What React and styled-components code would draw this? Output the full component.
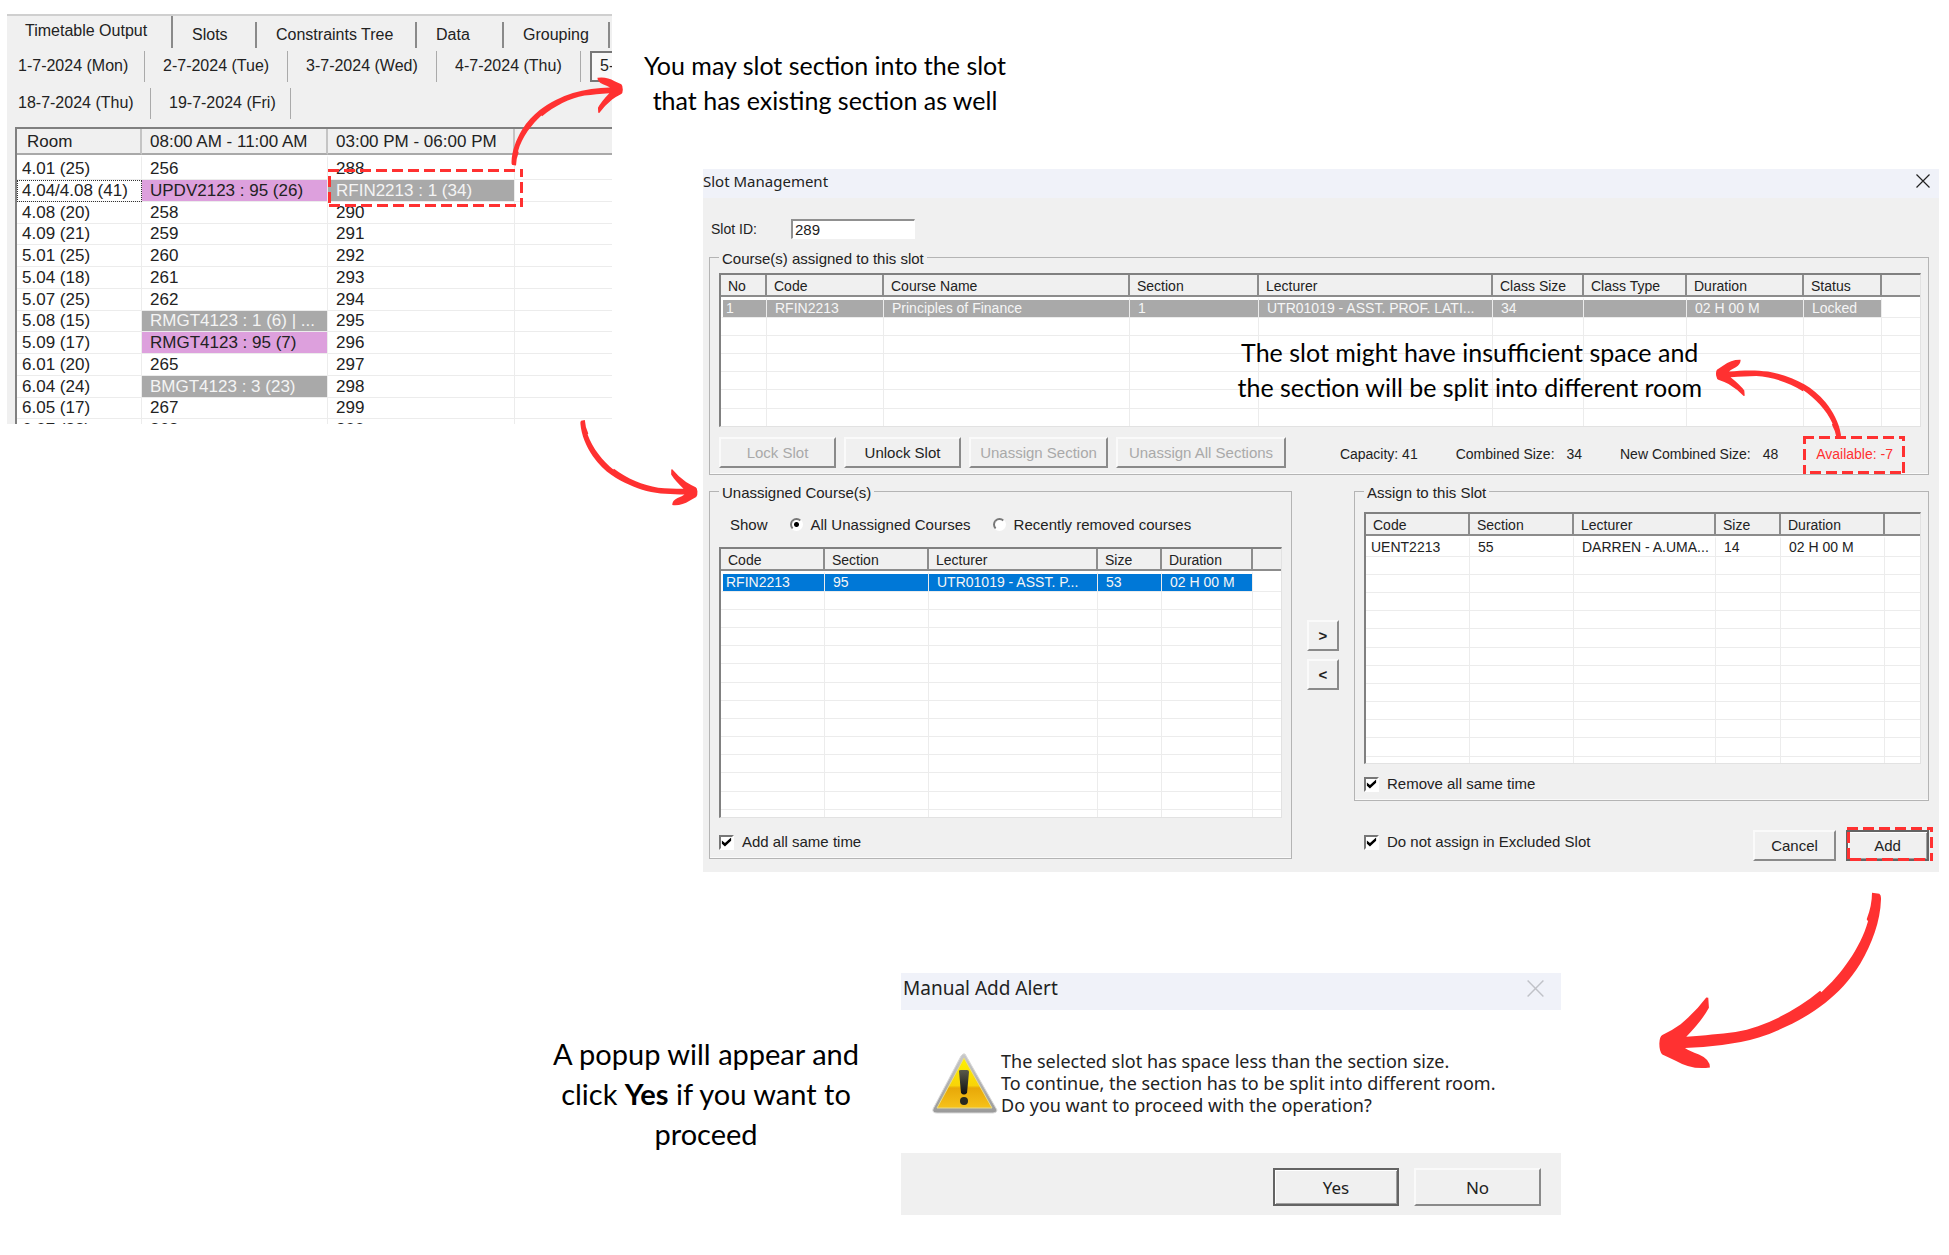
import styled, { createGlobalStyle, css } from 'styled-components'

const RED = '#ff3131'

const GlobalStyle = createGlobalStyle`
  * { box-sizing: border-box; }
  body {
    margin: 0;
    background: #fff;
    color: #222;
    font-family: "Liberation Sans", Arial, sans-serif;
    font-size: 14px;
  }
  button, input { font-family: inherit; color: inherit; }
`

const ROOMS = [
  ['4.01 (25)', '256', '288'],
  ['4.04/4.08 (41)', 'UPDV2123 : 95 (26)', 'RFIN2213 : 1 (34)'],
  ['4.08 (20)', '258', '290'],
  ['4.09 (21)', '259', '291'],
  ['5.01 (25)', '260', '292'],
  ['5.04 (18)', '261', '293'],
  ['5.07 (25)', '262', '294'],
  ['5.08 (15)', 'RMGT4123 : 1 (6) | ...', '295'],
  ['5.09 (17)', 'RMGT4123 : 95 (7)', '296'],
  ['6.01 (20)', '265', '297'],
  ['6.04 (24)', 'BMGT4123 : 3 (23)', '298'],
  ['6.05 (17)', '267', '299'],
  ['6.07 (22)', '268', '300'],
]

const PINK = ['UPDV2123 : 95 (26)', 'RMGT4123 : 95 (7)']
const GREY = ['RFIN2213 : 1 (34)', 'RMGT4123 : 1 (6) | ...', 'BMGT4123 : 3 (23)']

const tone = (text) => {
  if (PINK.includes(text)) return 'pink'
  if (GREY.includes(text)) return 'grey'
  return undefined
}

const ASSIGNED = {
  cols: [['No', 46], ['Code', 117], ['Course Name', 246], ['Section', 129], ['Lecturer', 234], ['Class Size', 91], ['Class Type', 103], ['Duration', 117], ['Status', 78]],
  row: ['1', 'RFIN2213', 'Principles of Finance', '1', 'UTR01019 - ASST. PROF. LATI...', '34', '', '02 H 00 M', 'Locked'],
}

const UNASSIGNED = {
  cols: [['Code', 104], ['Section', 104], ['Lecturer', 169], ['Size', 64], ['Duration', 91]],
  row: ['RFIN2213', '95', 'UTR01019 - ASST. P...', '53', '02 H 00 M'],
}

const ASSIGN = {
  cols: [['Code', 104], ['Section', 104], ['Lecturer', 142], ['Size', 65], ['Duration', 104]],
  row: ['UENT2213', '55', 'DARREN - A.UMA...', '14', '02 H 00 M'],
}

const Arrow = (props) => (
  <ArrowSvg viewBox='180 90 670 532' aria-hidden='true' {...props}>
    <path
      fill={RED}
      d='M820 92 L842 95 Q848 100 847 112 C845 180 820 245 785 305 C755 355 715 395 680 423 C620 470 545 506 480 527 C410 548 330 555 258 559
      Q270 568 300 578 Q333 592 333 617 Q280 626 230 597 L190 578 Q181 570 181 545 Q182 524 190 520 Q220 505 245 487 Q290 450 322 407 L328 408 L330 438
      Q310 475 262 525 C320 521 360 517 410 511 C500 494 590 448 664 387 L668 391 C725 340 785 260 808 178 L804 172 Q820 130 820 92 Z'
    />
  </ArrowSvg>
)

const DashedBox = (props) => (
  <DashedSvg aria-hidden='true' {...props}>
    <rect width='100%' height='100%' fill='none' stroke={RED} strokeWidth='6' strokeDasharray='11 5' />
  </DashedSvg>
)

const CloseIcon = ({ size }) => (
  <svg width={size} height={size} viewBox='0 0 14 14' fill='none' stroke='currentColor' strokeWidth='1.2'>
    <path d='M0.5 0.5 L13.5 13.5 M13.5 0.5 L0.5 13.5' />
  </svg>
)

const WarningIcon = () => (
  <svg width='68' height='62' viewBox='0 0 68 62' aria-hidden='true'>
    <defs>
      <linearGradient id='warnFill' x1='0' y1='0' x2='0' y2='1'>
        <stop offset='0' stopColor='#fff200' />
        <stop offset='0.55' stopColor='#f8d408' />
        <stop offset='0.6' stopColor='#e8a808' />
        <stop offset='1' stopColor='#f6c21a' />
      </linearGradient>
      <linearGradient id='warnRim' x1='0' y1='0' x2='0' y2='1'>
        <stop offset='0' stopColor='#c9c9c9' />
        <stop offset='1' stopColor='#9a9a9a' />
      </linearGradient>
      <linearGradient id='warnMark' x1='0' y1='0' x2='0' y2='1'>
        <stop offset='0' stopColor='#5a5a4a' />
        <stop offset='1' stopColor='#101010' />
      </linearGradient>
    </defs>
    <path d='M34 2 L66 58 Q66 61 62 61 H6 Q1 61 2 57 L30 4 Q32 1 34 2 Z' fill='url(#warnRim)' stroke='#d9d9d9' />
    <path d='M33 6 L61 56 H6 Z' fill='url(#warnFill)' stroke='#e9dc8a' />
    <path d='M28 19 Q28 18 30 18 H36 Q38 18 38 20 L36 41 Q33 44 30 41 Z' fill='url(#warnMark)' />
    <circle cx='33' cy='49' r='4' fill='#2a2a20' />
  </svg>
)

const ListView = ({ data, rows, height, selected }) => (
  <ListFrame $height={height}>
    <ListTable $selected={selected}>
      <colgroup>
        {data.cols.map(([name, width]) => <Col key={name} $width={width} />)}
        <col />
      </colgroup>
      <thead>
        <tr>
          {data.cols.map(([name]) => <th key={name}>{name}</th>)}
          <td />
        </tr>
      </thead>
      <tbody>
        <tr>
          {data.row.map((cell, i) => <td key={i}>{cell}</td>)}
          <td />
        </tr>
        {Array.from({ length: rows }, (_, r) => (
          <tr key={r}>
            {data.cols.map(([name]) => <td key={name} />)}
            <td />
          </tr>
        ))}
      </tbody>
    </ListTable>
  </ListFrame>
)

const Timetable = () => (
  <TimetablePanel>
    <TabRow>
      <Tab $width={166} $active>Timetable Output</Tab>
      <Tab $width={84}>Slots</Tab>
      <Tab $width={160}>Constraints Tree</Tab>
      <Tab $width={87}>Data</Tab>
      <Tab $width={106}>Grouping</Tab>
    </TabRow>
    <DateRow>
      <DateTab $width={138}>1-7-2024 (Mon)</DateTab>
      <DateTab $width={143}>2-7-2024 (Tue)</DateTab>
      <DateTab $width={149}>3-7-2024 (Wed)</DateTab>
      <DateTab $width={144}>4-7-2024 (Thu)</DateTab>
      <OpenDate>5-</OpenDate>
    </DateRow>
    <DateRow>
      <DateTab $width={144}>18-7-2024 (Thu)</DateTab>
      <DateTab $width={140}>19-7-2024 (Fri)</DateTab>
    </DateRow>
    <RoomFrame>
      <RoomTable>
        <colgroup>
          <Col $width={125} />
          <Col $width={186} />
          <Col $width={187} />
          <col />
        </colgroup>
        <thead>
          <tr>
            <th>Room</th>
            <th>08:00 AM - 11:00 AM</th>
            <th>03:00 PM - 06:00 PM</th>
            <td />
          </tr>
        </thead>
        <tbody>
          {ROOMS.map(([room, morning, noon]) => (
            <tr key={room}>
              <RoomCell $focus={room === '4.04/4.08 (41)'}>{room}</RoomCell>
              <RoomCell $tone={tone(morning)}>{morning}</RoomCell>
              <RoomCell $tone={tone(noon)}>
                {noon}
                {tone(noon) && <CellMark />}
              </RoomCell>
              <td />
            </tr>
          ))}
        </tbody>
      </RoomTable>
    </RoomFrame>
  </TimetablePanel>
)

const SlotManagement = () => (
  <Dialog>
    <DialogTitle>
      <h2>Slot Management</h2>
      <CloseButton aria-label='Close'><CloseIcon size={14} /></CloseButton>
    </DialogTitle>
    <DialogBody>
      <SlotRow>
        <label htmlFor='slot-id'>Slot ID:</label>
        <SlotInput id='slot-id' type='text' defaultValue='289' />
      </SlotRow>

      <Group $top={5} $right={7} $bottom={6}>
        <legend>Course(s) assigned to this slot</legend>
        <ListWrap>
          <ListView data={ASSIGNED} rows={7} height={154} selected='#a9a9a9' />
          <SpaceNote>
            The slot might have insufficient space and<br />
            the section will be split into different room
          </SpaceNote>
        </ListWrap>
        <ActionRow>
          <Button $width={117} disabled>Lock Slot</Button>
          <Button $width={117}>Unlock Slot</Button>
          <Button $width={139} disabled>Unassign Section</Button>
          <Button $width={170} disabled>Unassign All Sections</Button>
          <Stats>
            <Stat>Capacity: 41</Stat>
            <Stat>Combined Size: <span>34</span></Stat>
            <Stat>New Combined Size: <span>48</span></Stat>
            <Available>
              Available: -7
              <AvailableMark />
              <AvailableArrow />
            </Available>
          </Stats>
        </ActionRow>
      </Group>

      <Columns>
        <Group $top={0} $right={9} $bottom={7}>
          <legend>Unassigned Course(s)</legend>
          <ShowRow>
            <span>Show</span>
            <Choice><Radio name='show' defaultChecked />All Unassigned Courses</Choice>
            <Choice><Radio name='show' />Recently removed courses</Choice>
          </ShowRow>
          <ListView data={UNASSIGNED} rows={13} height={271} selected='#0078d7' />
          <CheckLabel $top={15}><CheckBox defaultChecked />Add all same time</CheckLabel>
        </Group>

        <MoveButtons>
          <Button $width={32}>&gt;</Button>
          <Button $width={32}>&lt;</Button>
        </MoveButtons>

        <div>
          <Group $top={10} $right={7} $bottom={7}>
            <legend>Assign to this Slot</legend>
            <ListView data={ASSIGN} rows={12} height={252} />
            <CheckLabel $top={11}><CheckBox defaultChecked />Remove all same time</CheckLabel>
          </Group>
          <FooterRow>
            <CheckLabel $top={3}><CheckBox defaultChecked />Do not assign in Excluded Slot</CheckLabel>
            <FooterButtons>
              <Button $width={83}>Cancel</Button>
              <Marked>
                <Button $width={83} $main>Add</Button>
                <AddMark />
              </Marked>
            </FooterButtons>
          </FooterRow>
        </div>
      </Columns>
    </DialogBody>
  </Dialog>
)

const ManualAddAlert = () => (
  <Alert>
    <AlertTitle>
      <h2>Manual Add Alert</h2>
      <CloseButton aria-label='Close' $faded><CloseIcon size={17} /></CloseButton>
    </AlertTitle>
    <AlertBody>
      <WarningIcon />
      <p>
        The selected slot has space less than the section size.<br />
        To continue, the section has to be split into different room.<br />
        Do you want to proceed with the operation?
      </p>
    </AlertBody>
    <AlertFooter>
      <AlertButton $width={126} $main>Yes</AlertButton>
      <AlertButton $width={127}>No</AlertButton>
    </AlertFooter>
  </Alert>
)

const App = () => {
  return (
    <Page>
      <GlobalStyle />
      <TopRow>
        <Timetable />
        <Right>
          <TopNote>
            You may slot section into the slot<br />
            that has existing section as well
          </TopNote>
          <SlotManagement />
        </Right>
        <UpArrow />
        <DownArrow />
      </TopRow>
      <BottomRow>
        <PopupNote>
          A popup will appear and<br />
          click <strong>Yes</strong> if you want to<br />
          proceed
        </PopupNote>
        <ManualAddAlert />
        <BigArrow />
      </BottomRow>
    </Page>
  )
}

export default App


const ArrowSvg = styled.svg`
  display: block;
  overflow: visible;
`

const DashedSvg = styled.svg`
  position: absolute;
  overflow: hidden;
  pointer-events: none;
`

const Page = styled.main`
  min-height: 100vh;
  overflow: hidden;
`

const TopRow = styled.section`
  position: relative;
  display: flex;
  align-items: flex-start;
  gap: 31px;
  padding: 14px 10px 0 7px;
`

const Right = styled.div`
  flex: 1;
  min-width: 0;
`

const BottomRow = styled.section`
  display: flex;
  justify-content: flex-end;
  align-items: flex-start;
  padding: 20px 67px 40px 0;
`

/* arrows between the windows */

const UpArrow = styled(Arrow)`
  position: absolute;
  left: 511px;
  top: 77px;
  width: 112px;
  transform: rotate(180deg);
`

const DownArrow = styled(Arrow)`
  position: absolute;
  left: 582px;
  top: 417px;
  width: 114px;
  transform: rotate(-3deg) scaleX(-1);
`

const AvailableArrow = styled(Arrow)`
  position: absolute;
  left: -96px;
  top: -91px;
  width: 116px;
  transform: rotate(-8deg) scaleY(-1);
`

const BigArrow = styled(Arrow)`
  width: 223px;
  margin-left: 98px;
`

/* notes */

const Note = styled.p`
  margin: 0;
  color: #000;
  font-family: Lato, sans-serif;
  font-size: 25px;
  line-height: 35px;
  text-align: center;
`

const TopNote = styled(Note)`
  width: 364px;
  white-space: nowrap;
  padding-top: 34px;
  margin-bottom: 51px;
`

const SpaceNote = styled(Note)`
  position: absolute;
  right: 219px;
  top: 62px;
  white-space: nowrap;
`

const PopupNote = styled(Note)`
  margin: 142px 42px 0 0;
  font-size: 29px;
  line-height: 40px;
  white-space: nowrap;
`

/* timetable window */

const TimetablePanel = styled.div`
  flex: none;
  width: 605px;
  height: 410px;
  overflow: hidden;
  background: #f0f0f0;
  border-top: 2px solid #cfcfcf;
  font-size: 16px;
`

const TabRow = styled.div`
  display: flex;
  align-items: flex-end;
  height: 32px;
`

const Tab = styled.button`
  flex: none;
  width: ${p => p.$width}px;
  height: ${p => p.$active ? 32 : 26}px;
  padding: ${p => p.$active ? '0 0 2px 18px' : '0 0 1px 19px'};
  border: none;
  border-right: 2px solid #8a8a8a;
  background: none;
  font-size: 16px;
  text-align: left;
  white-space: nowrap;
`

const DateRow = styled.div`
  display: flex;
  height: 31px;
  margin: 3px 0 6px;
`

const DateTab = styled.button`
  flex: none;
  width: ${p => p.$width}px;
  padding: 0 0 2px 18px;
  border: none;
  border-right: 1px solid #aaa;
  background: none;
  font-size: 16px;
  text-align: left;
  white-space: nowrap;

  &:first-child { padding-left: 11px; }
`

const OpenDate = styled(DateTab)`
  width: 60px;
  margin-left: 9px;
  padding-left: 8px;
  background: #f8f8f8;
  border: 2px solid #777;
`

const RoomFrame = styled.div`
  margin: 8px 0 0 8px;
  background: #fff;
  border-left: 2px solid #808080;
  border-top: 2px solid #808080;
`

const tableBase = css`
  width: 100%;
  table-layout: fixed;
  border-collapse: separate;
  border-spacing: 0;
  white-space: nowrap;

  th {
    font-weight: normal;
    text-align: left;
  }
  td:last-child { border-right: none; }
`

const Col = styled.col`
  width: ${p => p.$width}px;
`

const RoomTable = styled.table`
  ${tableBase}
  font-size: 17px;

  thead th, thead td {
    height: 26px;
    padding: 2px 0 0 8px;
    background: #f0f0f0;
    border-right: 2px solid #c4c4c4;
    border-bottom: 2px solid #a9a9a9;
    line-height: 20px;
  }
  thead th:first-child { padding-left: 10px; }

  tbody td {
    height: 22px;
    padding: 0 0 0 8px;
    border-right: 1px solid #ececec;
    border-bottom: 1px solid #ececec;
    line-height: 21px;
  }
  tbody tr:nth-child(4n) td {
    height: 21px;
    line-height: 20px;
  }
  tbody tr:first-child td {
    height: 25px;
    border-top: 3px solid #fff;
  }
  tbody td:first-child { padding-left: 5px; }
`

const TONES = {
  pink: css`background: #dda0dd;`,
  grey: css`background: #a9a9a9; color: #f4f4f4;`,
}

const RoomCell = styled.td`
  position: relative;
  ${p => TONES[p.$tone]}
  ${p => p.$focus && css`
    outline: 1px dotted #333;
    outline-offset: -1px;
  `}
`

const CellMark = styled(DashedBox)`
  left: 0;
  top: -11px;
  width: 195px;
  height: 38px;
  z-index: 1;
`

/* slot management window */

const Dialog = styled.section`
  margin-left: 60px;
  background: #f0f0f0;
`

const DialogTitle = styled.header`
  display: flex;
  justify-content: space-between;
  height: 29px;
  padding: 2px 9px 0 0;
  background: #f0f2f9;

  h2 {
    margin: 0;
    font: 15px/20px "Noto Sans", sans-serif;
  }
`

const CloseButton = styled.button`
  display: flex;
  align-items: center;
  height: 20px;
  padding: 0;
  border: none;
  background: none;
  color: ${p => p.$faded ? '#c0c2c8' : '#222'};
`

const DialogBody = styled.div`
  padding: 21px 10px 11px 6px;
  font-size: 15px;
`

const SlotRow = styled.div`
  display: flex;
  align-items: center;
  height: 20px;
  margin-bottom: 7px;
  padding-left: 2px;
  font-size: 14px;

  label { width: 80px; }
`

const SlotInput = styled.input`
  width: 124px;
  height: 20px;
  padding: 0 2px;
  border: 1px solid #fff;
  border-left: 2px solid #909090;
  border-top: 2px solid #909090;
  background: #fff;
  font-size: 15px;
`

const Group = styled.fieldset`
  min-width: 0;
  margin: 0;
  padding: ${p => p.$top}px ${p => p.$right}px ${p => p.$bottom}px 9px;
  border: 1px solid #b4b4b4;
  box-shadow: inset 0 -1px 0 #fafafa;

  legend {
    padding: 4px 3px 0;
    font-size: 15px;
    line-height: 18px;
  }
`

const ListWrap = styled.div`
  position: relative;
`

const ListFrame = styled.div`
  height: ${p => p.$height}px;
  overflow: hidden;
  background: #fff;
  border: 1px solid #e2e2e2;
  border-left: 2px solid #808080;
  border-top: 2px solid #808080;
`

const ListTable = styled.table`
  ${tableBase}
  font-size: 14px;

  thead th, thead td {
    height: 22px;
    padding: 1px 0 0 7px;
    background: #f0f0f0;
    border-right: 2px solid #8c8c8c;
    border-bottom: 2px solid #8c8c8c;
  }

  tbody td {
    height: 18px;
    padding: 0 0 0 8px;
    border-right: 1px solid #ececec;
    border-bottom: 1px solid #ececec;
    line-height: 17px;
  }
  tbody td:first-child { padding-left: 5px; }
  tbody tr:nth-child(6n) td { height: 19px; }
  tbody tr:first-child td {
    height: 21px;
    border-top: 3px solid #fff;
  }

  ${p => p.$selected && css`
    tbody tr:first-child td:not(:last-child) {
      background: ${p.$selected};
      color: #f6f6f6;
    }
    tbody tr:first-child td:first-child {
      padding-left: 3px;
      border-left: 2px solid #fff;
    }
  `}
`

const Button = styled.button`
  width: ${p => p.$width}px;
  height: 31px;
  padding: 0;
  border: 2px solid;
  border-color: #fafafa #8a8a8a #8a8a8a #fafafa;
  background: #f0f0f0;
  font-size: 15px;
  white-space: nowrap;
  ${p => p.$main && css`
    border-color: #646464;
    box-shadow: inset 1px 1px 0 #fff, inset -1px -1px 0 #a0a0a0;
  `}

  &:disabled { color: #a9a9a9; }
`

const ActionRow = styled.div`
  display: flex;
  align-items: center;
  gap: 8px;
  margin-top: 9px;
  height: 32px;
`

const Stats = styled.div`
  display: flex;
  gap: 38px;
  margin: 3px 28px 0 auto;
  font-size: 14px;
  line-height: 18px;
  white-space: nowrap;
`

const Stat = styled.span`
  span { margin-left: 8px; }
`

const Available = styled.span`
  position: relative;
  color: ${RED};
`

const AvailableMark = styled(DashedBox)`
  left: -13px;
  top: -9px;
  width: 102px;
  height: 38px;
`

const Columns = styled.div`
  display: grid;
  grid-template-columns: minmax(0, 583fr) 62px minmax(0, 575fr);
  align-items: start;
  margin-top: 5px;
`

const ShowRow = styled.div`
  display: flex;
  align-items: center;
  height: 45px;
  padding-left: 11px;
`

const Choice = styled.label`
  display: flex;
  align-items: center;
  gap: 8px;
  margin-left: 22px;
`

const Radio = styled.input.attrs({ type: 'radio' })`
  appearance: none;
  width: 13px;
  height: 13px;
  margin: 0;
  border: 2px solid;
  border-color: #777 #fff #fff #777;
  border-radius: 50%;
  background: #fff;

  &:checked {
    background: radial-gradient(circle, #000 2px, #fff 3px);
  }
`

const CheckLabel = styled.label`
  display: flex;
  align-items: center;
  gap: 8px;
  padding-top: ${p => p.$top}px;
  line-height: 18px;
`

const CheckBox = styled.input.attrs({ type: 'checkbox' })`
  appearance: none;
  width: 15px;
  height: 15px;
  margin: 0;
  border: 2px solid;
  border-color: #777 #fff #fff #777;
  background: #fff;

  &:checked::before {
    content: '';
    display: block;
    width: 11px;
    height: 11px;
    background: #000;
    clip-path: polygon(8% 36%, 36% 60%, 92% 8%, 92% 38%, 36% 92%, 8% 66%);
  }
`

const MoveButtons = styled.div`
  display: flex;
  flex-direction: column;
  align-items: center;
  gap: 8px;
  padding-top: 140px;

  button { font-weight: bold; }
`

const FooterRow = styled.div`
  display: flex;
  justify-content: space-between;
  align-items: flex-start;
  margin-top: 29px;
  padding-left: 10px;
`

const FooterButtons = styled.div`
  display: flex;
  gap: 10px;
`

const Marked = styled.div`
  position: relative;
`

const AddMark = styled(DashedBox)`
  left: 1px;
  top: -3px;
  width: 86px;
  height: 34px;
`

/* alert window */

const Alert = styled.section`
  flex: none;
  width: 660px;
  margin-top: 81px;
  background: #fff;
`

const AlertTitle = styled(DialogTitle)`
  height: 37px;
  padding: 5px 17px 0 2px;

  h2 { font-size: 19px; }
`

const AlertBody = styled.div`
  display: flex;
  align-items: flex-start;
  height: 143px;
  padding: 42px 0 0 30px;

  p {
    margin: -2px 0 0 2px;
    font: 18px/22px "Noto Sans", sans-serif;
    white-space: nowrap;
  }
`

const AlertFooter = styled.footer`
  display: flex;
  justify-content: flex-end;
  gap: 15px;
  padding: 15px 20px 9px;
  background: #f0f0f0;
`

const AlertButton = styled(Button)`
  height: 38px;
  font: 17px "Noto Sans", sans-serif;
`
